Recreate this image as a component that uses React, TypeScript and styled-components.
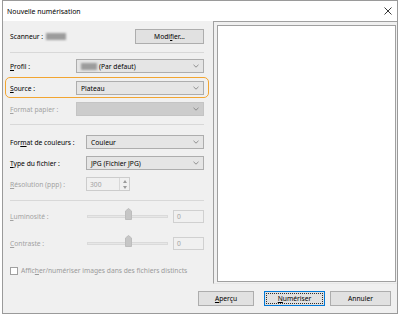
import React from 'react'
import styled, { createGlobalStyle, css } from 'styled-components'

const GlobalStyle = createGlobalStyle`
  html, body {
    margin: 0;
    padding: 0;
    background: #ffffff;
  }
  body {
    font-family: "Noto Sans", "Open Sans", sans-serif;
    font-size: 6.7px;
    color: #000;
  }
  * { box-sizing: border-box; }
  u { text-decoration-thickness: 1px; text-underline-offset: 1px; }
`

const Window = styled.div`
  margin: 0 3px 2px 2px;
  width: 396px;
  height: 314px;
  border: 1px solid #9a9a9a;
  display: flex;
  flex-direction: column;
  background: #f0f0f0;
`

const TitleBar = styled.div`
  height: 20px;
  flex: none;
  background: #fff;
  display: flex;
  align-items: center;
  justify-content: space-between;
  padding: 0 5px 0 4px;
  font-size: 6.9px;
`

const Main = styled.div`
  flex: 1;
  display: flex;
  min-height: 0;
`

const LeftPanel = styled.div`
  width: 210px;
  flex: none;
  padding: 8px 9px 0 7px;
  display: flex;
  flex-direction: column;
`

const Row = styled.div<{ $mt?: number; $highlight?: boolean }>`
  position: relative;
  display: flex;
  align-items: center;
  height: 14px;
  margin-top: ${p => p.$mt ?? 0}px;
  ${p => p.$highlight && css`
    &::after {
      content: '';
      position: absolute;
      inset: -4px -5px -3px -5px;
      border: 1.5px solid #f2a531;
      border-radius: 5px;
      pointer-events: none;
    }
  `}
`

const Label = styled.div<{ $w: number; $disabled?: boolean }>`
  width: ${p => p.$w}px;
  flex: none;
  white-space: nowrap;
  color: ${p => (p.$disabled ? '#a2a2a2' : '#000')};
`

const Separator = styled.div<{ $mt: number; $mb: number }>`
  height: 1px;
  background: #d8d8d8;
  margin: ${p => p.$mt}px 0 ${p => p.$mb}px;
`

const Spacer = styled.div`
  flex: 1;
`

const Button = styled.button<{ $w: number; $focus?: boolean; $mr?: number }>`
  width: ${p => p.$w}px;
  height: 15px;
  padding: 0;
  margin-right: ${p => p.$mr ?? 0}px;
  font: inherit;
  color: #000;
  background: #e1e1e1;
  border: 1px solid ${p => (p.$focus ? '#0078d7' : '#adadad')};
  display: flex;
  align-items: center;
  justify-content: center;
  position: relative;
  ${p => p.$focus && css`
    &::after {
      content: '';
      position: absolute;
      inset: 1px;
      border: 1px dotted #303030;
    }
  `}
`

const Select = styled.div<{ $disabled?: boolean }>`
  flex: 1;
  height: 14px;
  display: flex;
  align-items: center;
  padding: 0 4px 0 4px;
  background: ${p => (p.$disabled ? '#cccccc' : '#e5e5e5')};
  border: 1px solid ${p => (p.$disabled ? '#c4c4c4' : '#adadad')};
  color: #000;
`

const SelectText = styled.span`
  flex: 1;
  display: flex;
  align-items: center;
  gap: 2px;
  white-space: nowrap;
`

const Blur = styled.span<{ $w: number; $ml?: number }>`
  display: inline-block;
  width: ${p => p.$w}px;
  height: 7px;
  margin-left: ${p => p.$ml ?? 0}px;
  background: #9c9c9c;
  filter: blur(0.8px);
`

const Spinner = styled.div`
  width: 44px;
  height: 14px;
  display: flex;
  border: 1px solid #cccccc;
  background: #f0f0f0;
  color: #a2a2a2;
`

const SpinnerText = styled.span`
  flex: 1;
  padding-left: 3px;
  display: flex;
  align-items: center;
`

const SpinnerArrows = styled.div`
  width: 10px;
  display: flex;
  flex-direction: column;
  border-left: 1px solid #d8d8d8;
`

const SpinHalf = styled.div`
  flex: 1;
  display: flex;
  align-items: center;
  justify-content: center;
`

const Track = styled.div`
  width: 81px;
  height: 14px;
  margin-left: 1px;
  position: relative;
  display: flex;
  align-items: center;
`

const TrackLine = styled.div`
  width: 100%;
  height: 3px;
  background: #e7e7e7;
  border: 1px solid #dadada;
`

const Thumb = styled.svg`
  position: absolute;
  left: 38px;
  top: -1px;
`

const ValueBox = styled.div`
  margin-left: 5px;
  width: 31px;
  height: 13px;
  border: 1px solid #d0d0d0;
  background: #f0f0f0;
  color: #a2a2a2;
  padding-left: 3px;
  display: flex;
  align-items: center;
`

const CheckRow = styled.div`
  display: flex;
  align-items: center;
  gap: 3px;
  margin-top: 16px;
  color: #9a9a9a;
  white-space: nowrap;
`

const Checkbox = styled.span`
  width: 8px;
  height: 8px;
  border: 1px solid #a0a0a0;
  background: #fff;
  flex: none;
`

const PreviewFrame = styled.div`
  flex: 1;
  border-left: 1px solid #a0a0a0;
  border-top: 1px solid #a0a0a0;
  border-bottom: 1px solid #e8e8e8;
  padding: 3px 1px 1px 3px;
  display: flex;
`

const PreviewCanvas = styled.div`
  flex: 1;
  background: #fff;
  border: 1px solid #a0a0a0;
`

const Footer = styled.div`
  height: 29px;
  flex: none;
  display: flex;
  justify-content: flex-end;
  align-items: flex-start;
  padding: 7px 6px 0 0;
  gap: 5px;
`

const Chevron = () => (
  <svg width="6" height="4" viewBox="0 0 6 4">
    <path d="M0.5 0.8 L3 3.2 L5.5 0.8" fill="none" stroke="#7a7a7a" strokeWidth="0.8" />
  </svg>
)

const Dropdown = ({ children, disabled }: { children?: React.ReactNode; disabled?: boolean }) => (
  <Select $disabled={disabled}>
    <SelectText>{children}</SelectText>
    <Chevron />
  </Select>
)

const Slider = () => (
  <>
    <Track>
      <TrackLine />
      <Thumb width="7" height="12" viewBox="0 0 7 12">
        <path d="M3.5 0.5 L6.5 3 L6.5 11.5 L0.5 11.5 L0.5 3 Z" fill="#c6c6c6" stroke="#bdbdbd" strokeWidth="1" />
      </Thumb>
    </Track>
    <ValueBox>0</ValueBox>
  </>
)

export default function App() {
  return (
    <>
      <GlobalStyle />
      <Window>
        <TitleBar>
          <span>Nouvelle numérisation</span>
          <svg width="8" height="8" viewBox="0 0 8 8">
            <path d="M0.5 0.5 L7.5 7.5 M7.5 0.5 L0.5 7.5" stroke="#222" strokeWidth="0.9" />
          </svg>
        </TitleBar>
        <Main>
          <LeftPanel>
            <Row>
              <span>Scanneur :</span>
              <Blur $w={20} $ml={3} />
              <Spacer />
              <Button $w={69}>Modi<u>f</u>ier...</Button>
            </Row>
            <Separator $mt={9} $mb={6} />
            <Row>
              <Label $w={66}><u>P</u>rofil :</Label>
              <Dropdown><Blur $w={16} />(Par défaut)</Dropdown>
            </Row>
            <Row $mt={8} $highlight>
              <Label $w={66}><u>S</u>ource :</Label>
              <Dropdown>Plateau</Dropdown>
            </Row>
            <Row $mt={7}>
              <Label $w={66} $disabled><u>F</u>ormat papier :</Label>
              <Dropdown disabled />
            </Row>
            <Separator $mt={8} $mb={10} />
            <Row>
              <Label $w={76}>For<u>m</u>at de couleurs :</Label>
              <Dropdown>Couleur</Dropdown>
            </Row>
            <Row $mt={7}>
              <Label $w={76}><u>T</u>ype du fichier :</Label>
              <Dropdown>JPG (Fichier JPG)</Dropdown>
            </Row>
            <Row $mt={7}>
              <Label $w={76} $disabled><u>R</u>ésolution (ppp) :</Label>
              <Spinner>
                <SpinnerText>300</SpinnerText>
                <SpinnerArrows>
                  <SpinHalf>
                    <svg width="4" height="3" viewBox="0 0 4 3"><path d="M0 3 L2 0 L4 3 Z" fill="#9a9a9a" /></svg>
                  </SpinHalf>
                  <SpinHalf>
                    <svg width="4" height="3" viewBox="0 0 4 3"><path d="M0 0 L2 3 L4 0 Z" fill="#9a9a9a" /></svg>
                  </SpinHalf>
                </SpinnerArrows>
              </Spinner>
            </Row>
            <Separator $mt={9} $mb={8} />
            <Row>
              <Label $w={76} $disabled><u>L</u>uminosité :</Label>
              <Slider />
            </Row>
            <Row $mt={13}>
              <Label $w={76} $disabled><u>C</u>ontraste :</Label>
              <Slider />
            </Row>
            <CheckRow>
              <Checkbox />
              <span>Affic<u>h</u>er/numériser images dans des fichiers distincts</span>
            </CheckRow>
          </LeftPanel>
          <PreviewFrame>
            <PreviewCanvas />
          </PreviewFrame>
        </Main>
        <Footer>
          <Button $w={56} $mr={5}><u>A</u>perçu</Button>
          <Button $w={61} $focus><u>N</u>umériser</Button>
          <Button $w={61}>Annuler</Button>
        </Footer>
      </Window>
    </>
  )
}
